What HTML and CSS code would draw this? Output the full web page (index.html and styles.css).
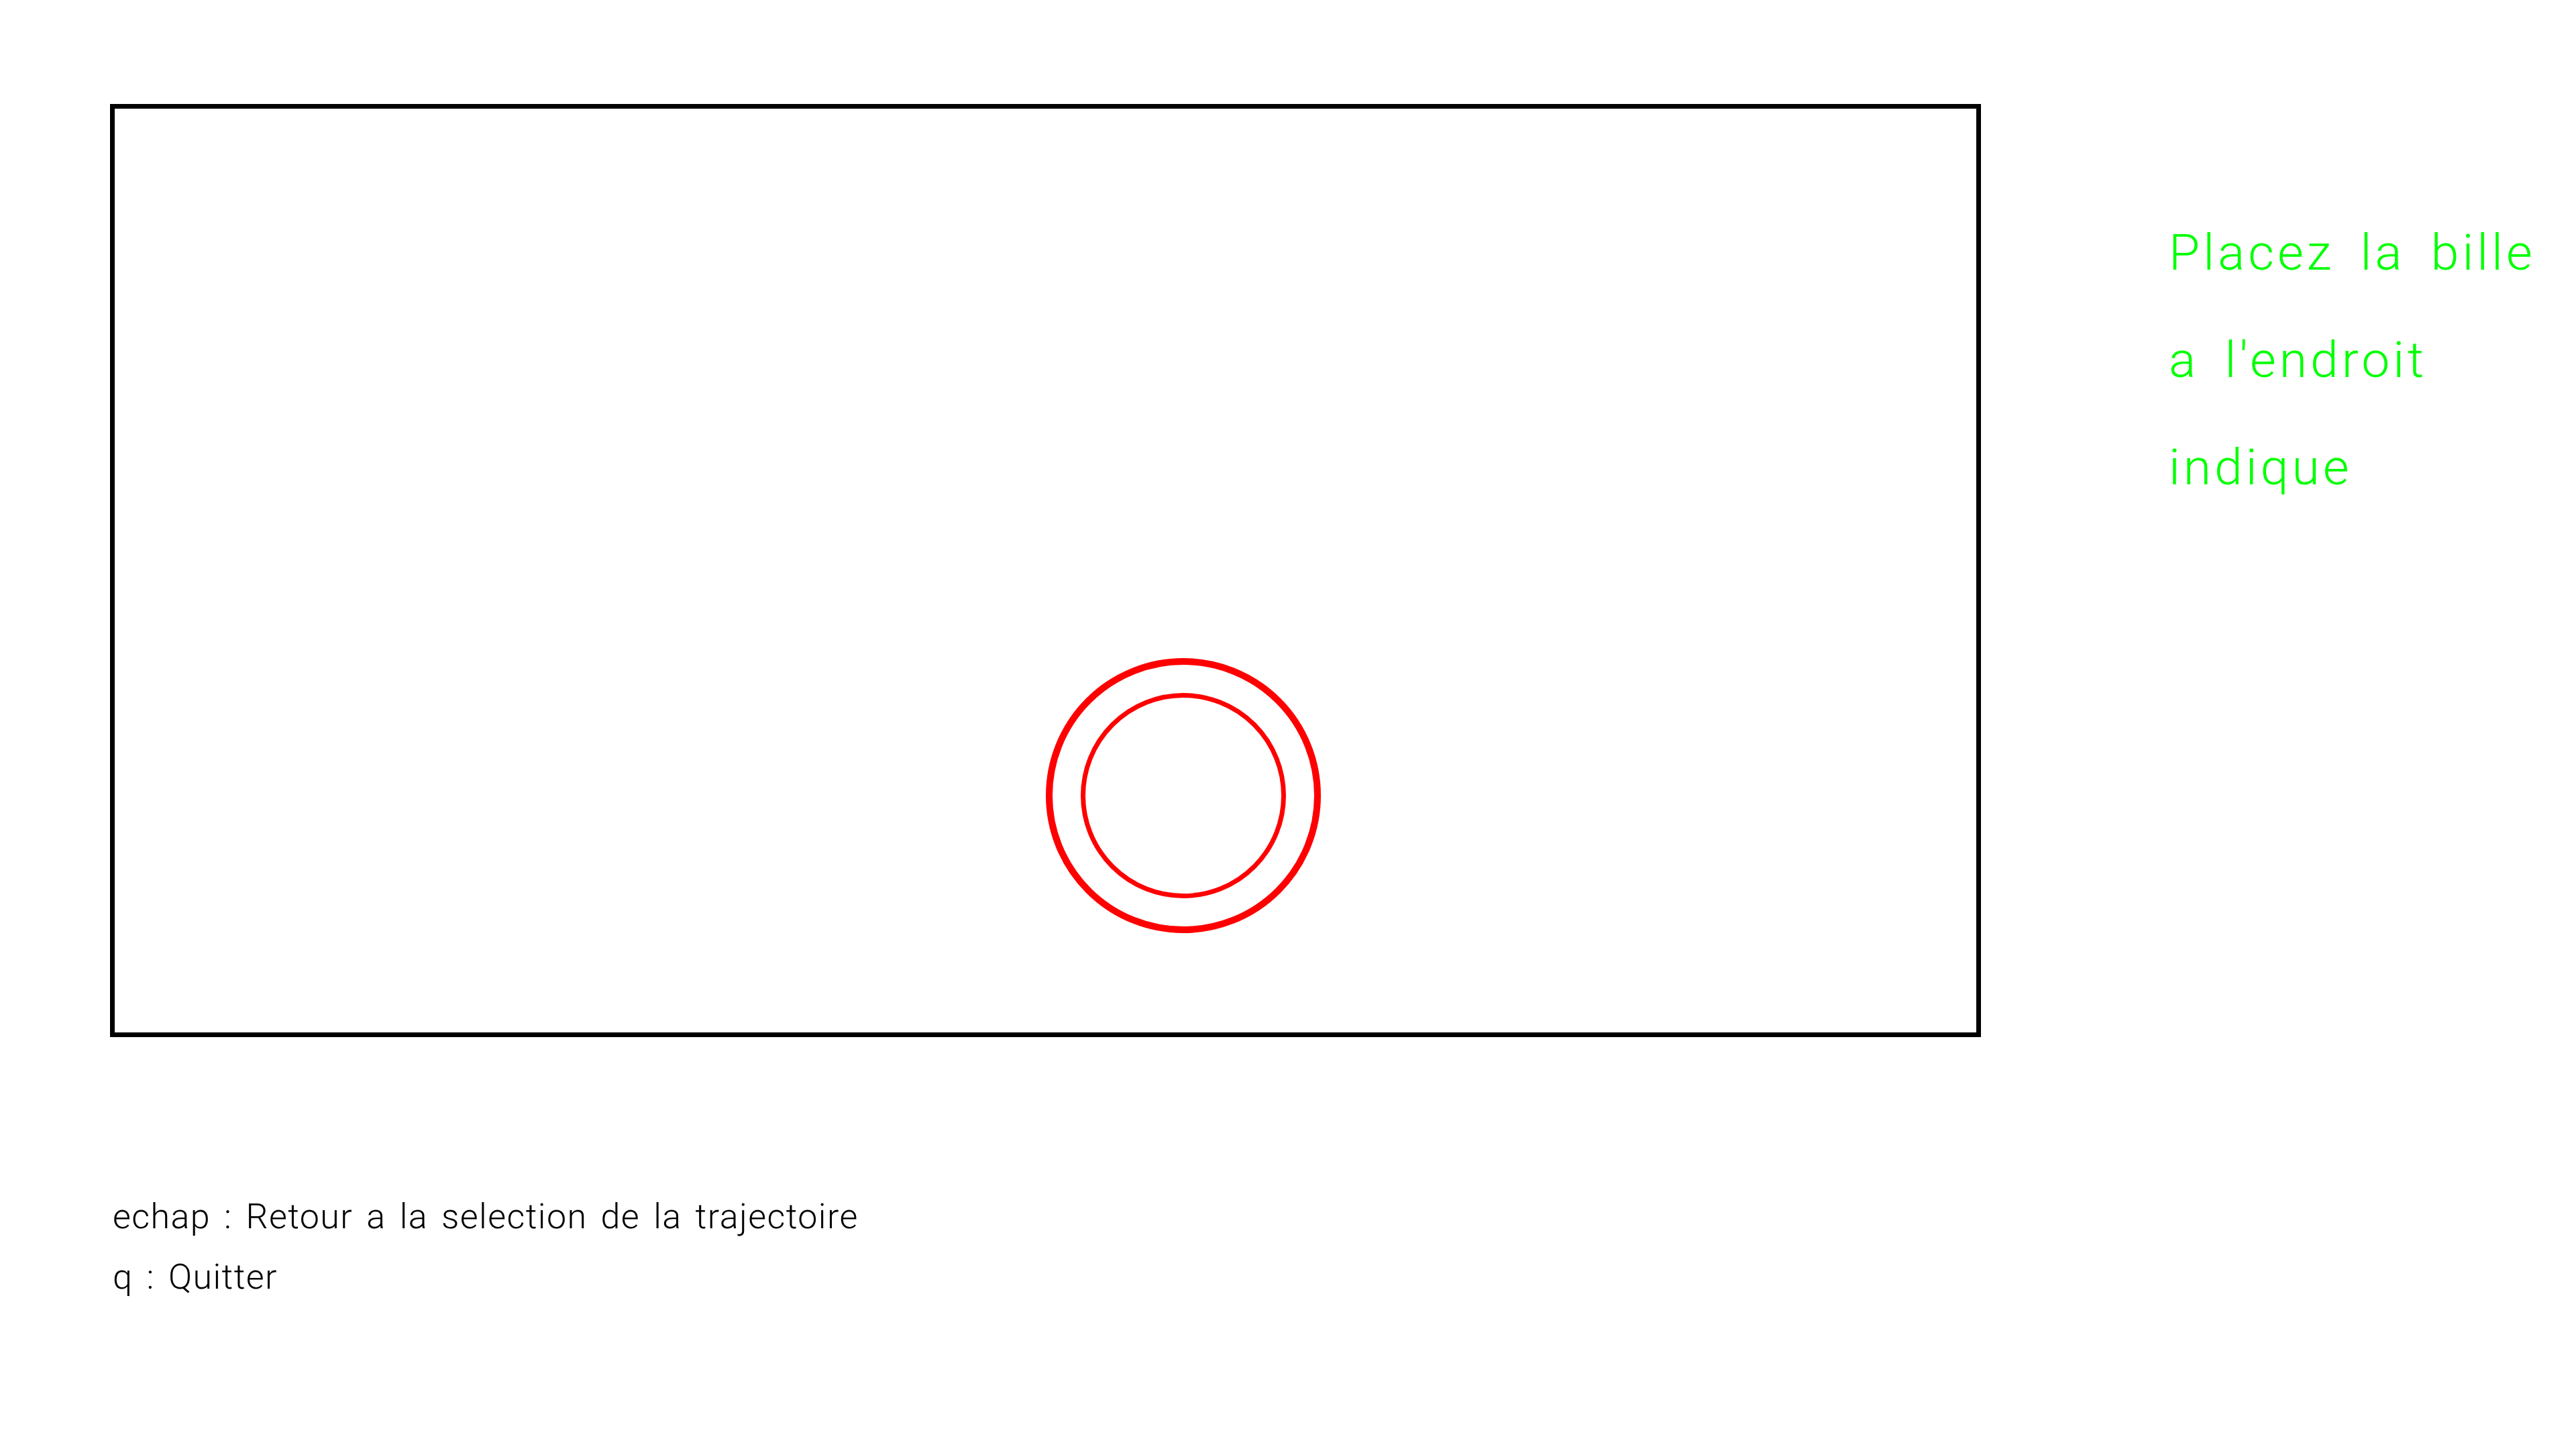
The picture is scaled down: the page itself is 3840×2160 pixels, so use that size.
FILE: index.html
```html
<!DOCTYPE html>
<html lang="fr">
<head>
<meta charset="utf-8">
<title>Placez la bille</title>
<link rel="stylesheet" href="styles.css">
</head>
<body>
<div class="screen">
  <div class="top">
    <div class="table">
      <div class="ring ring-outer"></div>
      <div class="ring ring-inner"></div>
    </div>
    <div class="message">
      <p>Placez la bille</p>
      <p>a l'endroit</p>
      <p>indique</p>
    </div>
  </div>
  <div class="help">
    <p>echap : Retour a la selection de la trajectoire</p>
    <p>q : Quitter</p>
  </div>
</div>
</body>
</html>
```

FILE: styles.css
```css
html, body {
  margin: 0;
  padding: 0;
  background: #ffffff;
}

.screen {
  width: 3840px;
  height: 2160px;
  padding: 155px 0 0 164px;
  box-sizing: border-box;
  font-family: Roboto, "Liberation Sans", sans-serif;
  font-weight: 200;
}

.top {
  display: flex;
  align-items: flex-start;
  gap: 280px;
}

.table {
  position: relative;
  width: 2789px;
  height: 1391px;
  border: 7px solid #000000;
  box-sizing: border-box;
  flex: none;
}

.ring {
  position: absolute;
  border-style: solid;
  border-color: #ff0000;
  border-radius: 50%;
  box-sizing: border-box;
}

.ring-outer {
  left: 1388px;
  top: 819px;
  width: 410px;
  height: 410px;
  border-width: 10px;
}

.ring-inner {
  left: 1440px;
  top: 871px;
  width: 306px;
  height: 306px;
  border-width: 7px;
}

.message {
  margin-top: 141px;
  color: #00ff00;
  font-size: 75px;
  font-weight: 300;
  line-height: 160px;
  letter-spacing: 5px;
  word-spacing: 15px;
  white-space: nowrap;
}

.message p,
.help p {
  margin: 0;
}

.help {
  margin-top: 223px;
  padding-left: 4px;
  color: #000000;
  font-size: 52px;
  font-weight: 300;
  line-height: 90px;
  letter-spacing: 1.4px;
  word-spacing: 6px;
  white-space: nowrap;
}
```
